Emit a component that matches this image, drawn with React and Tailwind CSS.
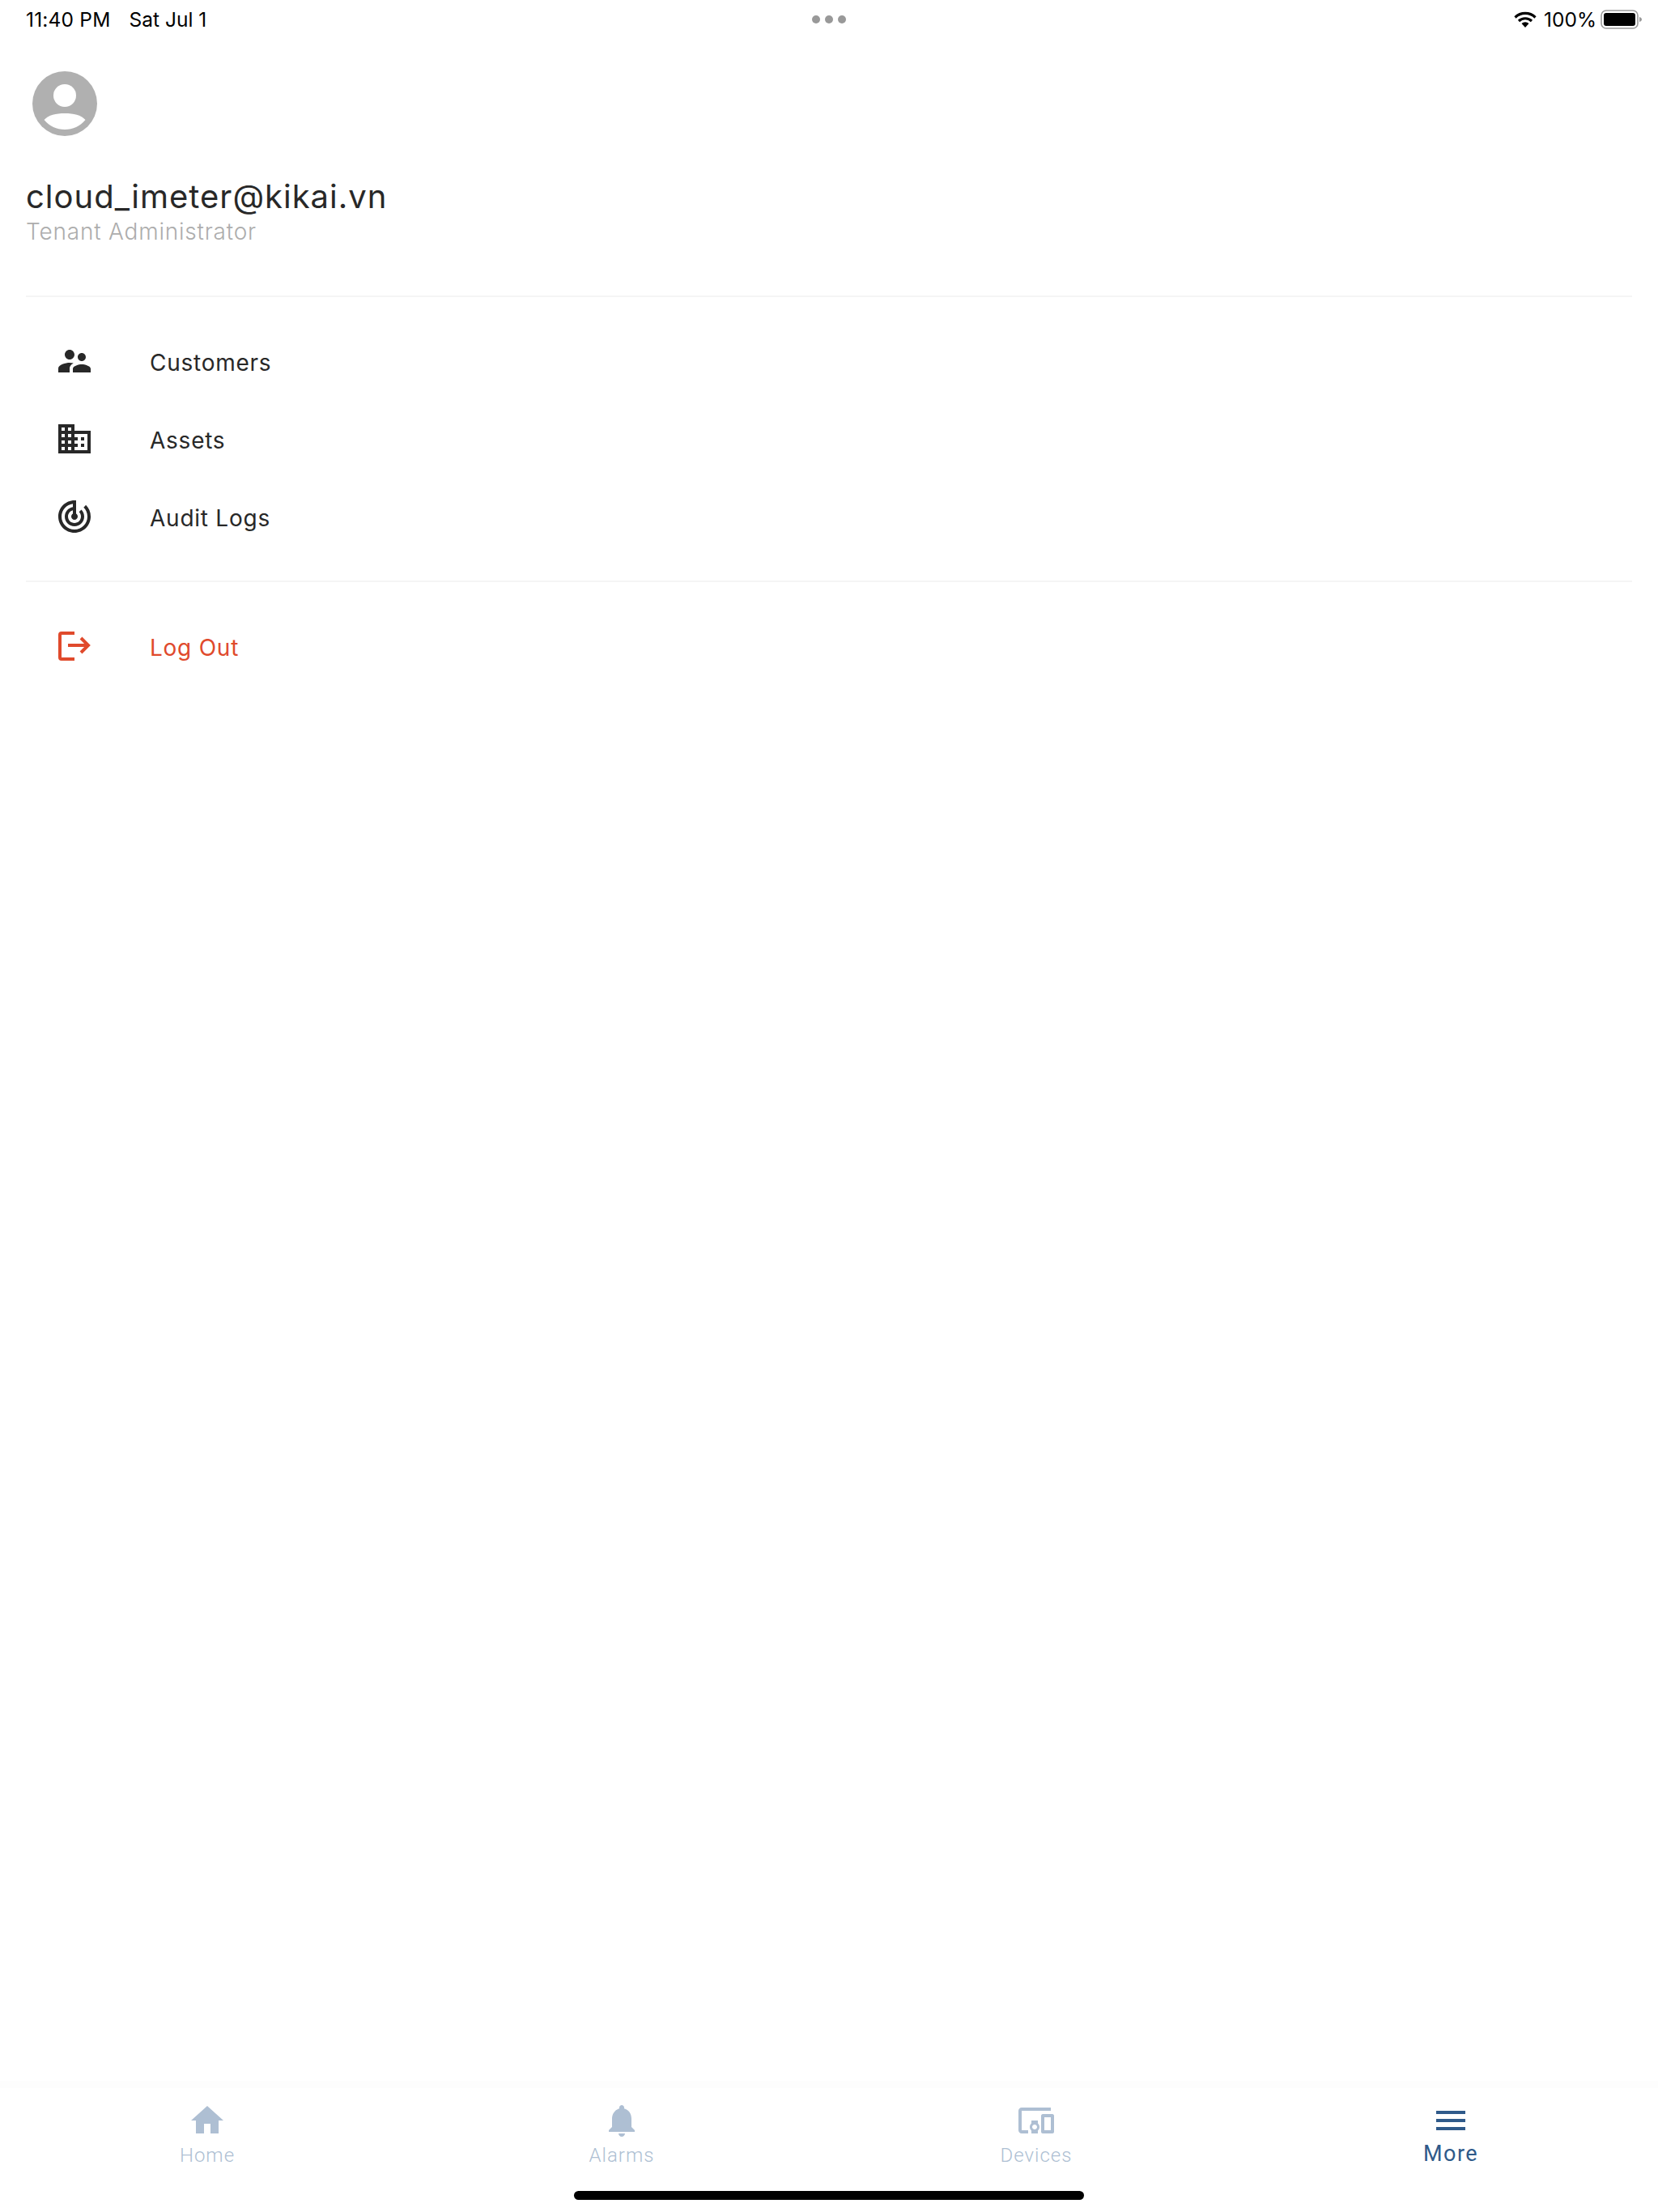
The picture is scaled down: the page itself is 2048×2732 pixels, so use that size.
function Glyph({ d, className }) {
  return (
    <svg viewBox="0 0 24 24" className={className} fill="currentColor">
      <path d={d} />
    </svg>
  );
}

const people = "M16.5 12c1.38 0 2.49-1.12 2.49-2.5S17.88 7 16.5 7C15.12 7 14 8.12 14 9.5s1.12 2.5 2.5 2.5zM9 11c1.66 0 2.99-1.34 2.99-3S10.66 5 9 5C7.34 5 6 6.34 6 8s1.34 3 3 3zm7.5 3c-1.83 0-5.5.92-5.5 2.75V19h11v-2.25c0-1.83-3.67-2.75-5.5-2.75zM9 13c-2.33 0-7 1.17-7 3.5V19h7v-2.25c0-.85.33-2.34 2.37-3.47C10.5 13.1 9.66 13 9 13z";
const domain = "M12 7V3H2v18h20V7H12zM6 19H4v-2h2v2zm0-4H4v-2h2v2zm0-4H4V9h2v2zm0-4H4V5h2v2zm4 12H8v-2h2v2zm0-4H8v-2h2v2zm0-4H8V9h2v2zm0-4H8V5h2v2zm10 12h-8v-2h2v-2h-2v-2h2v-2h-2V9h8v10zm-2-8h-2v2h2v-2zm0 4h-2v2h2v-2z";
const track = "M19.07 4.93l-1.41 1.41C19.1 7.79 20 9.79 20 12c0 4.42-3.58 8-8 8s-8-3.58-8-8c0-4.08 3.05-7.44 7-7.93v2.02C8.16 6.57 6 9.03 6 12c0 3.31 2.69 6 6 6s6-2.69 6-6c0-1.66-.67-3.16-1.76-4.24l-1.41 1.41C15.55 9.9 16 10.9 16 12c0 2.21-1.79 4-4 4s-4-1.79-4-4c0-1.86 1.28-3.41 3-3.86v2.14c-.6.35-1 .98-1 1.72 0 1.1.9 2 2 2s2-.9 2-2c0-.74-.4-1.38-1-1.72V2h-1C6.48 2 2 6.48 2 12s4.48 10 10 10 10-4.48 10-10c0-2.76-1.12-5.26-2.93-7.07z";
const home = "M10 20v-6h4v6h5v-8h3L12 3 2 12h3v8z";
const bell = "M12 22c1.1 0 2-.9 2-2h-4c0 1.1.89 2 2 2zm6-6v-5c0-3.07-1.64-5.64-4.5-6.32V4c0-.83-.67-1.5-1.5-1.5s-1.5.67-1.5 1.5v.68C7.63 5.36 6 7.92 6 11v5l-2 2v1h16v-1l-2-2z";
const devices = "M3 6h18V4H3c-1.1 0-2 .9-2 2v12c0 1.1.9 2 2 2h4v-2H3V6zm10 6H9v1.78c-.61.55-1 1.33-1 2.22s.39 1.67 1 2.22V20h4v-1.78c.61-.55 1-1.34 1-2.22s-.39-1.67-1-2.22V12zm-2 5.5c-.83 0-1.5-.67-1.5-1.5s.67-1.5 1.5-1.5 1.5.67 1.5 1.5-.67 1.5-1.5 1.5zM22 8h-6c-.5 0-1 .5-1 1v10c0 .5.5 1 1 1h6c.5 0 1-.5 1-1V9c0-.5-.5-1-1-1zm-1 10h-4v-8h4v8z";
const menu = "M3 18h18v-2H3v2zm0-5h18v-2H3v2zm0-7v2h18V6H3z";

function MenuRow({ icon, label, className }) {
  return (
    <div className="flex h-[96px] items-center pl-[68px]">
      <div className="w-[48px] h-[48px] -translate-y-[2px] text-[#282828]">{icon}</div>
      <span className={`ml-[69px] text-[28px] tracking-[0.75px] ${className || "text-[#282828]"}`}>{label}</span>
    </div>
  );
}

function Tab({ d, label, active }) {
  return (
    <div className="flex-1 flex flex-col items-center">
      <Glyph d={d} className={`w-[48px] h-[48px] ${active ? "text-[#2f5a8a]" : "text-[#aebfd3]"}`} />
      {active ? (
        <span className="mt-[1px] font-['Roboto',sans-serif] text-[27px] leading-[32px] tracking-[1.5px] text-[#2f5a8a]">{label}</span>
      ) : (
        <span className="mt-[3px] font-['Roboto',sans-serif] text-[24px] leading-[32px] tracking-[1px] font-light text-[#aebfd3]">{label}</span>
      )}
    </div>
  );
}

export default function App() {
  return (
    <div className="w-[2048px] h-[2732px] bg-white flex flex-col font-['Inter',sans-serif] overflow-hidden">
      <div className="h-[48px] shrink-0 flex items-center text-[24.5px] text-black">
        <div className="flex-1">
          <div className="ml-[32px] flex gap-[23px]">
            <span className="tracking-[0.2px]">11:40 PM</span>
            <span>Sat Jul 1</span>
          </div>
        </div>
        <div className="flex gap-[6px]">
          <span className="w-[10px] h-[10px] rounded-full bg-[#999999]" />
          <span className="w-[10px] h-[10px] rounded-full bg-[#999999]" />
          <span className="w-[10px] h-[10px] rounded-full bg-[#999999]" />
        </div>
        <div className="flex-1">
          <div className="mr-[19px] flex items-center justify-end">
            <svg viewBox="0 0 28 20" className="w-[28px] h-[20px] mr-[9px]" fill="none" stroke="black" strokeWidth="3.2">
              <path d="M1.5 7.5a18 18 0 0 1 25 0" />
              <path d="M6 12a11.5 11.5 0 0 1 16 0" />
              <path d="M14 20l-4.5-5a6.5 6.5 0 0 1 9 0z" fill="black" stroke="none" />
            </svg>
            <span>100%</span>
            <svg viewBox="0 0 52 24" className="w-[52px] h-[24px] ml-[5px]">
              <rect x="1" y="1" width="45" height="22" rx="6" fill="none" stroke="#9a9a9a" strokeWidth="1.6" />
              <rect x="4" y="4" width="39" height="16" rx="3" fill="black" />
              <path d="M48 9c2 .6 3 1.6 3 3s-1 2.4-3 3z" fill="#9a9a9a" />
            </svg>
          </div>
        </div>
      </div>

      <div className="pt-[40px] pl-[32px] pr-[32px]">
        <svg viewBox="0 0 80 80" className="ml-[8px] w-[80px] h-[80px]">
          <circle cx="40" cy="40" r="40" fill="#b0b0b0" />
          <circle cx="40" cy="30" r="14" fill="white" />
          <path d="M14.5 60C20 54 29 52 40 52s20 2 25.500 8C59 68 50 72 40 72s-19-4-25.500-12z" fill="white" />
        </svg>
        <div className="mt-[50px] text-[40px] leading-[50px] tracking-[1px] text-[#282828]">cloud_imeter@kikai.vn</div>
        <div className="text-[28px] leading-[36px] tracking-[0.8px] font-light text-[#adadad]">Tenant Administrator</div>
        <div className="mt-[61px] h-[2px] bg-[#f5f5f5]" />
      </div>

      <div className="pt-[33px]">
        <MenuRow label="Customers" icon={<Glyph d={people} className="w-full h-full" />} />
        <MenuRow label="Assets" icon={<Glyph d={domain} className="w-full h-full" />} />
        <MenuRow label="Audit Logs" icon={<Glyph d={track} className="w-full h-full" />} />
      </div>

      <div className="px-[32px] mt-[29px]">
        <div className="h-[2px] bg-[#f5f5f5]" />
      </div>

      <div className="pt-[33px]">
        <MenuRow
          label="Log Out"
          className="text-[#e04a2c]"
          icon={
            <svg viewBox="0 0 48 48" className="w-full h-full" fill="none" stroke="#e04a2c" strokeWidth="4">
              <path d="M24 8H8a2 2 0 0 0-2 2v28a2 2 0 0 0 2 2h16" />
              <path d="M16 23H41" />
              <path d="M32 14l9 9-9 9" />
            </svg>
          }
        />
      </div>

      <div className="flex-1" />

      <div className="h-[9px] bg-[#fdfdfd] shrink-0" />
      <div className="h-[153px] shrink-0 flex flex-col pt-[16px]">
        <div className="flex h-[85px]">
          <Tab label="Home" d={home} />
          <Tab label="Alarms" d={bell} />
          <Tab label="Devices" d={devices} />
          <Tab label="More" d={menu} active />
        </div>
        <div className="mt-[26px] mx-auto w-[630px] h-[11px] rounded-full bg-black" />
      </div>
    </div>
  );
}
